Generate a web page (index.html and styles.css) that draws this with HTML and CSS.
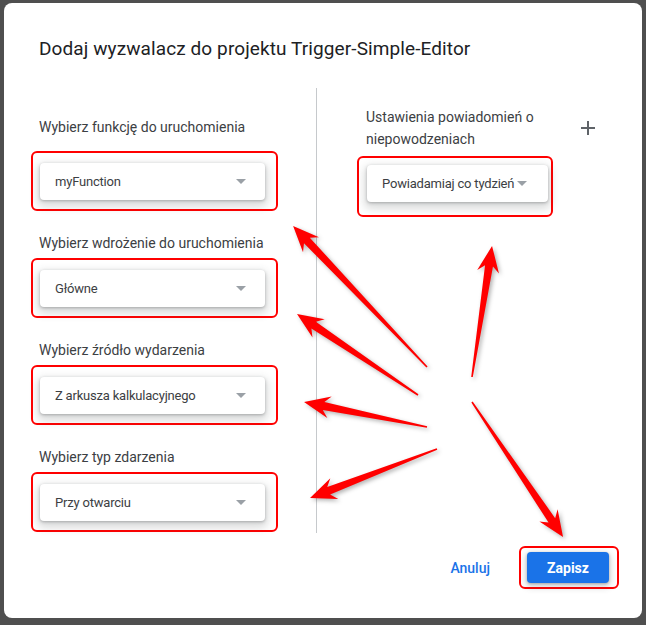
FILE: index.html
```
<!DOCTYPE html>
<html lang="pl">
<head>
<meta charset="utf-8">
<title>Dodaj wyzwalacz</title>
<link rel="stylesheet" href="styles.css">
</head>
<body>
<div class="dialog">
  <h1 class="title">Dodaj wyzwalacz do projektu Trigger-Simple-Editor</h1>
  <div class="content">
    <div class="col col-left">
      <div class="field field-first">
        <div class="label">Wybierz funkcję do uruchomienia</div>
        <div class="mark"><div class="select"><span>myFunction</span><i class="caret"></i></div></div>
      </div>
      <div class="field">
        <div class="label">Wybierz wdrożenie do uruchomienia</div>
        <div class="mark"><div class="select"><span>Główne</span><i class="caret"></i></div></div>
      </div>
      <div class="field">
        <div class="label">Wybierz źródło wydarzenia</div>
        <div class="mark"><div class="select"><span>Z arkusza kalkulacyjnego</span><i class="caret"></i></div></div>
      </div>
      <div class="field">
        <div class="label">Wybierz typ zdarzenia</div>
        <div class="mark"><div class="select"><span>Przy otwarciu</span><i class="caret"></i></div></div>
      </div>
    </div>
    <div class="col col-right">
      <div class="notify-head">
        <div class="label label-wrap">Ustawienia powiadomień o niepowodzeniach</div>
        <svg class="plus" width="14" height="14" viewBox="0 0 14 14"><path d="M7 0v14M0 7h14" stroke="#5f6368" stroke-width="2" fill="none"/></svg>
      </div>
      <div class="mark mark-right"><div class="select select-narrow"><span>Powiadamiaj co tydzień</span><i class="caret"></i></div></div>
    </div>
  </div>
  <div class="actions">
    <button class="btn-text">Anuluj</button>
    <div class="mark mark-btn"><button class="btn-primary">Zapisz</button></div>
  </div>
</div>
<svg class="arrows" width="646" height="625" viewBox="0 0 646 625">
  <g fill="#ff0000">
    <polygon transform="translate(427 367) rotate(-133.5)" points="0,-0.8 174.5,-4 168.5,-11 194.5,0 168.5,11 174.5,4 0,0.8"/>
    <polygon transform="translate(418 395) rotate(-146.2)" points="0,-0.8 125.6,-4 119.6,-11 145.6,0 119.6,11 125.6,4 0,0.8"/>
    <polygon transform="translate(427 427) rotate(-168.5)" points="0,-0.8 105.5,-4 99.5,-11 125.5,0 99.5,11 105.5,4 0,0.8"/>
    <polygon transform="translate(437 449) rotate(158.9)" points="0,-0.8 116.1,-4 110.1,-11 136.1,0 110.1,11 116.1,4 0,0.8"/>
    <polygon transform="translate(472 377) rotate(-81.3)" points="0,-0.8 112.5,-4 106.5,-11 132.5,0 106.5,11 112.5,4 0,0.8"/>
    <polygon transform="translate(472 402) rotate(56)" points="0,-0.8 142.8,-4 136.8,-11 162.8,0 136.8,11 142.8,4 0,0.8"/>
  </g>
</svg>
</body>
</html>
```
FILE: styles.css
```
html, body {
  margin: 0;
}
body {
  position: relative;
  width: 646px;
  height: 625px;
  box-sizing: border-box;
  padding: 3px 4px 7px;
  background: #4f4f4f;
  font-family: Roboto, "Liberation Sans", sans-serif;
  overflow: hidden;
}
.dialog {
  width: 638px;
  height: 615px;
  box-sizing: border-box;
  background: #fff;
  border-radius: 8px;
  padding-top: 34px;
}
.title {
  margin: 0;
  padding-left: 35px;
  font-size: 19px;
  letter-spacing: 0.1px;
  line-height: 24px;
  font-weight: 400;
  color: #202124;
}
.content {
  display: flex;
  margin-top: 27px;
  height: 445px;
}
.col-left {
  width: 313px;
  box-sizing: border-box;
  border-right: 1px solid #c6c9cc;
  padding: 29px 0 0 27px;
}
.field {
  margin-bottom: 22px;
}
.label {
  font-size: 14px;
  line-height: 20px;
  color: #3c4043;
  padding-left: 8px;
  margin-bottom: 5px;
}
.field-first .label {
  margin-bottom: 14px;
}
.mark {
  width: fit-content;
  border: 2px solid #ff0000;
  border-radius: 6px;
  padding: 10px 11px 9px 7px;
}
.select {
  width: 225px;
  height: 37px;
  box-sizing: border-box;
  display: flex;
  align-items: center;
  justify-content: space-between;
  padding: 0 19px 0 15px;
  background: #fff;
  border-radius: 4px;
  box-shadow: 0 1px 3px rgba(60, 64, 67, 0.35), 0 4px 8px 3px rgba(60, 64, 67, 0.18);
  font-size: 13px;
  letter-spacing: -0.2px;
  white-space: nowrap;
  color: #3c4043;
}
.caret {
  width: 0;
  height: 0;
  border-left: 5px solid transparent;
  border-right: 5px solid transparent;
  border-top: 5px solid #9aa0a6;
}
.col-right {
  flex: 1;
  padding: 18px 47px 0 40px;
}
.notify-head {
  display: flex;
  align-items: center;
  justify-content: space-between;
}
.label-wrap {
  width: 185px;
  line-height: 22px;
  padding-left: 9px;
  margin-bottom: 0;
}
.mark-right {
  margin-top: 6px;
  padding: 7px 3px 13px 8px;
}
.select-narrow {
  width: 181px;
  padding-right: 21px;
}
.actions {
  display: flex;
  justify-content: flex-end;
  align-items: center;
  gap: 29px;
  margin-top: 13px;
  padding-right: 23px;
}
.btn-text {
  border: 0;
  background: none;
  padding: 0;
  font-family: Roboto, "Liberation Sans", sans-serif;
  font-size: 14px;
  font-weight: 500;
  color: #1a73e8;
}
.mark-btn {
  padding: 4px 8px 4px 6px;
}
.btn-primary {
  display: block;
  width: 82px;
  height: 31px;
  border: 0;
  border-radius: 4px;
  background: #1a73e8;
  color: #fff;
  font-family: Roboto, "Liberation Sans", sans-serif;
  font-size: 14px;
  font-weight: 700;
  box-shadow: 0 1px 3px rgba(60, 64, 67, 0.35), 0 3px 6px 2px rgba(60, 64, 67, 0.18);
}
.arrows {
  position: absolute;
  left: 0;
  top: 0;
  pointer-events: none;
  filter: drop-shadow(2px 2px 2px rgba(0, 0, 0, 0.3));
}
```
